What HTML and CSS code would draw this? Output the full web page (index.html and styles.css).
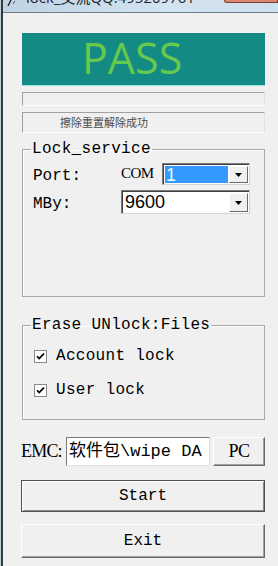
FILE: index.html
```html
<!DOCTYPE html>
<html lang="zh">
<head>
    <meta charset="UTF-8">
    <meta name="viewport" content="width=device-width, initial-scale=1.0">
    <title>lock_交流QQ:495209761</title>
    <link rel="stylesheet" href="styles.css">
</head>
<body>
    <div class="window">
        <div class="titlebar">
            <svg class="app-icon" width="12" height="6" viewBox="0 0 12 6">
                <path d="M2 6 L5 0" stroke="#222" stroke-width="1.4" fill="none"/>
                <path d="M7 4 L9 1" stroke="#555" stroke-width="1" fill="none"/>
            </svg>
            <span class="title">lock_交流QQ:495209761</span>
            <span class="close-btn"></span>
        </div>

        <div class="client">
            <div class="pass">PASS</div>
            <div class="sunken progress"></div>
            <div class="sunken status">擦除重置解除成功</div>

            <fieldset class="group service">
                <legend>Lock_service</legend>
                <div class="service-grid">
                    <span class="label port-label">Port:</span>
                    <span class="com">COM</span>
                    <div class="combo com-combo">
                        <span class="combo-value selected">1</span>
                        <span class="drop"><svg width="7" height="4" viewBox="0 0 7 4"><polygon points="0,0 7,0 3.5,4" fill="#000"/></svg></span>
                    </div>
                    <span class="label mby-label">MBy:</span>
                    <div class="combo baud-combo">
                        <span class="combo-value">9600</span>
                        <span class="drop"><svg width="7" height="4" viewBox="0 0 7 4"><polygon points="0,0 7,0 3.5,4" fill="#000"/></svg></span>
                    </div>
                </div>
            </fieldset>

            <fieldset class="group files">
                <legend>Erase UNlock:Files</legend>
                <label class="check-row">
                    <svg class="checkbox" width="13" height="13" viewBox="0 0 13 13">
                        <rect x="0.5" y="0.5" width="12" height="12" fill="#fff" stroke="#8a8a8a"/>
                        <path d="M3 6.2 L5.2 8.6 L10 3.6" stroke="#000" stroke-width="1.7" fill="none"/>
                    </svg>
                    <span>Account lock</span>
                </label>
                <label class="check-row">
                    <svg class="checkbox" width="13" height="13" viewBox="0 0 13 13">
                        <rect x="0.5" y="0.5" width="12" height="12" fill="#fff" stroke="#8a8a8a"/>
                        <path d="M3 6.2 L5.2 8.6 L10 3.6" stroke="#000" stroke-width="1.7" fill="none"/>
                    </svg>
                    <span>User lock</span>
                </label>
            </fieldset>

            <div class="emc-row">
                <span class="emc-label">EMC:</span>
                <div class="emc-input">软件包\wipe DA</div>
                <button class="btn pc-btn">PC</button>
            </div>

            <button class="btn wide default">Start</button>
            <button class="btn wide exit">Exit</button>
        </div>
    </div>
</body>
</html>
```

FILE: styles.css
```css
html, body {
    margin: 0;
    padding: 0;
}
body {
    width: 278px;
    height: 566px;
    overflow: hidden;
    background-color: #c3cfd8;
    font-family: "Liberation Mono", monospace;
}
.window {
    height: 566px;
    margin-left: 1px;
    border-left: 2px solid #2e3d38;
    display: flex;
    flex-direction: column;
    background-color: #f0f0f0;
}

/* title bar, mostly cut off at the top */
.titlebar {
    height: 12px;
    display: flex;
    align-items: flex-start;
    overflow: hidden;
    background: linear-gradient(to right, #c0d3e3, #d3e3f0 60%, #cfe0ee);
    border-bottom: 1px solid #6e7e8a;
}
.app-icon {
    margin: 0 0 0 3px;
    flex: none;
}
.title {
    margin: -11px 0 0 8px;
    font-family: "Open Sans", "Noto Sans CJK SC", sans-serif;
    font-size: 15px;
    line-height: 16px;
    color: #1b2630;
    white-space: nowrap;
}
.close-btn {
    margin-left: auto;
    width: 52px;
    height: 2px;
    flex: none;
    background-color: #d9876f;
    border: 1px solid #7b3b2c;
    border-top: none;
    border-radius: 0 0 0 4px;
}

.client {
    flex: 1;
    display: flex;
    flex-direction: column;
    padding: 20px 13px 0 19px;
}

.pass {
    height: 52px;
    background-color: #138a83;
    border-bottom: 1px solid #8fe6df;
    padding-left: 60px;
    font-family: "Open Sans", sans-serif;
    font-size: 43px;
    line-height: 50px;
    color: #66c84e;
}

.sunken {
    border-top: 1px solid #a0a0a0;
    border-left: 1px solid #a0a0a0;
    border-right: 1px solid #e2e2e2;
    border-bottom: 1px solid #fff;
}
.progress {
    margin-top: 6px;
    height: 12px;
}
.status {
    margin-top: 6px;
    height: 19px;
    padding-left: 37px;
    font-family: "Noto Sans CJK SC", sans-serif;
    font-size: 11px;
    line-height: 19px;
    color: #4a4a4a;
}

.group {
    margin: 0;
    border: 1px solid #a8a8a8;
    box-shadow: 1px 1px 0 #fff inset;
    padding: 0 14px 0 10px;
    min-width: 0;
}
.group legend {
    padding: 0 1px;
    margin-left: -2px;
    font-size: 16px;
    line-height: 18px;
    letter-spacing: 0.3px;
    color: #000;
}
.service {
    margin-top: 7px;
    padding-top: 5px;
    padding-bottom: 82px;
}
.service-grid {
    display: grid;
    grid-template-columns: 88px 41px 1fr;
    grid-template-rows: 22px 24px;
    row-gap: 5px;
}
.label {
    font-size: 16px;
    line-height: 18px;
    align-self: end;
}
.port-label {
    margin-bottom: 0;
}
.mby-label {
    align-self: center;
    margin-top: 4px;
}
.com {
    font-family: "Liberation Serif", serif;
    font-size: 15px;
    line-height: 18px;
    letter-spacing: -0.5px;
    align-self: start;
    margin-top: 1px;
}
.baud-combo {
    grid-column: 2 / 4;
}

.combo {
    display: flex;
    background-color: #fff;
    border-top: 1px solid #7a7a7a;
    border-left: 1px solid #7a7a7a;
    border-right: 1px solid #d4d4d4;
    border-bottom: 1px solid #d4d4d4;
    box-shadow: 1px 1px 0 #404040 inset;
    padding: 2px 1px 1px 2px;
}
.combo-value {
    flex: 1;
    font-family: "Liberation Sans", sans-serif;
    font-size: 18px;
    line-height: 18px;
    padding-left: 1px;
    color: #000;
}
.combo-value.selected {
    background-color: #3399ff;
    color: #e8ffff;
}
.drop {
    width: 17px;
    margin-left: 1px;
    display: flex;
    align-items: center;
    justify-content: center;
    background-color: #f0f0f0;
    border-top: 1px solid #fff;
    border-left: 1px solid #fff;
    border-right: 1px solid #696969;
    border-bottom: 1px solid #696969;
}

.files {
    margin-top: 19px;
    padding-top: 12px;
    padding-bottom: 19px;
    display: flex;
    flex-direction: column;
    gap: 14px;
}
.check-row {
    height: 20px;
    display: flex;
    align-items: center;
    gap: 9px;
    padding-left: 1px;
    font-size: 16px;
    letter-spacing: 0.3px;
}
.checkbox {
    flex: none;
}

.emc-row {
    margin: 17px 0 0 -1px;
    height: 29px;
    display: flex;
    align-items: stretch;
}
.emc-label {
    width: 45px;
    font-family: "Liberation Serif", serif;
    font-size: 18px;
    line-height: 29px;
    letter-spacing: -0.8px;
}
.emc-input {
    width: 140px;
    padding-left: 2px;
    background-color: #fff;
    border-top: 1px solid #7a7a7a;
    border-left: 1px solid #7a7a7a;
    border-right: 1px solid #e3e3e3;
    border-bottom: 1px solid #e3e3e3;
    font-family: "Liberation Mono", "Noto Sans CJK SC", monospace;
    font-size: 17px;
    line-height: 27px;
    white-space: nowrap;
    overflow: hidden;
}

.btn {
    background-color: #f0f0f0;
    border-top: 1px solid #fff;
    border-left: 1px solid #fff;
    border-right: 1px solid #696969;
    border-bottom: 1px solid #696969;
    box-shadow: -1px -1px 0 #a0a0a0 inset;
    padding: 0;
    color: #000;
}
.pc-btn {
    margin-left: 3px;
    flex: 1;
    font-family: "Liberation Serif", serif;
    font-size: 18px;
    letter-spacing: -0.5px;
}
.wide {
    margin-left: -1px;
    font-family: "Liberation Mono", monospace;
    font-size: 16px;
}
.default {
    margin-top: 14px;
    height: 32px;
    border: 1px solid #505050;
    box-shadow: 1px 1px 0 #fff inset, -1px -1px 0 #8a8a8a inset;
}
.exit {
    margin-top: 12px;
    height: 34px;
}
```
